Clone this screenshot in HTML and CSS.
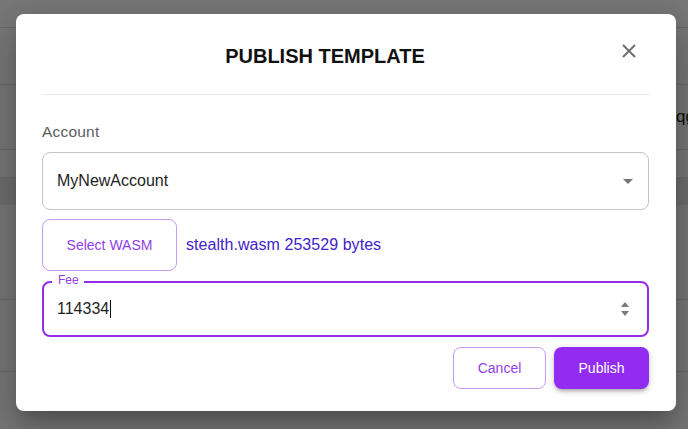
FILE: index.html
```html
<!DOCTYPE html>
<html>
<head>
<meta charset="utf-8">
<link rel="stylesheet" href="styles.css">
</head>
<body>
<div class="page">
  <div class="row r1"></div>
  <div class="row r2"></div>
  <div class="row r3"><span class="peek">qg</span></div>
  <div class="row r4"></div>
  <div class="row r5"></div>
  <div class="row r6"></div>
  <div class="row r7"></div>
</div>
<div class="backdrop"></div>
<div class="dialog">
  <div class="header">
    <div class="title">PUBLISH TEMPLATE</div>
    <div class="close">
      <svg width="16" height="16" viewBox="0 0 16 16"><path d="M2 2L14 14M14 2L2 14" stroke="#707070" stroke-width="2"/></svg>
    </div>
  </div>
  <div class="label">Account</div>
  <div class="select">
    <span class="value">MyNewAccount</span>
    <svg class="caret" width="10" height="5" viewBox="0 0 10 5"><path d="M0 0H10L5 5Z" fill="#757575"/></svg>
  </div>
  <div class="wasm-row">
    <div class="btn-outline wasm-btn">Select WASM</div>
    <span class="file">stealth.wasm 253529 bytes</span>
  </div>
  <div class="fee">
    <span class="fee-label">Fee</span>
    <span class="value">114334</span><span class="cursor"></span>
    <svg class="spin" width="10" height="16" viewBox="0 0 10 16"><path d="M1 6H9L5 1Z M1 10H9L5 15Z" fill="#7a7a7a"/></svg>
  </div>
  <div class="actions">
    <div class="btn-outline cancel">Cancel</div>
    <div class="btn-primary">Publish</div>
  </div>
</div>
</body>
</html>
```
FILE: styles.css
```css
* { box-sizing: border-box; }
html, body { margin: 0; padding: 0; }
body {
  width: 688px;
  height: 429px;
  overflow: hidden;
  font-family: "Liberation Sans", Arial, sans-serif;
  background: #fff;
  position: relative;
}
.page { display: flex; flex-direction: column; }
.row { border-bottom: 1px solid #e4e4e4; position: relative; }
.r1 { height: 28px; }
.r2 { height: 57px; }
.r3 { height: 65px; }
.r4 { height: 28px; }
.r5 { height: 27px; background: #ececec; border-bottom: none; }
.r6 { height: 95px; }
.r7 { height: 72px; }
.peek {
  position: absolute;
  left: 676px;
  top: 22px;
  font-size: 17px;
  color: #222;
}
.backdrop {
  position: absolute;
  inset: 0;
  background: rgba(0, 0, 0, 0.53);
}
.dialog {
  position: absolute;
  left: 16px;
  top: 14px;
  width: 660px;
  height: 397px;
  background: #fff;
  border-radius: 8px;
  padding: 0 27px 0 26px;
  display: flex;
  flex-direction: column;
  box-shadow: 0 11px 15px -7px rgba(0,0,0,.2), 0 24px 38px 3px rgba(0,0,0,.14), 0 9px 46px 8px rgba(0,0,0,.12);
}
.header {
  display: flex;
  height: 81px;
  border-bottom: 1px solid #e8e8e8;
}
.title {
  flex: 1;
  text-align: center;
  font-weight: 700;
  font-size: 20px;
  line-height: 24px;
  margin-top: 30px;
  color: #111;
}
.close {
  width: 41px;
  display: flex;
  justify-content: center;
  padding-top: 29px;
}
.label {
  margin-top: 27px;
  font-size: 15.5px;
  line-height: 20px;
  color: #5c5c5c;
  letter-spacing: 0.2px;
}
.select {
  margin-top: 10px;
  height: 58px;
  border: 1px solid #c4c4c4;
  border-radius: 8px;
  display: flex;
  align-items: center;
  padding: 0 15px 0 14px;
}
.value {
  font-size: 16px;
  color: #1e1e1e;
}
.caret { margin-left: auto; }
.wasm-row {
  margin-top: 9px;
  display: flex;
  align-items: center;
  gap: 9px;
}
.btn-outline {
  border: 1px solid #c79cf2;
  border-radius: 8px;
  color: #9240e6;
  font-size: 14px;
  display: flex;
  align-items: center;
  justify-content: center;
  background: #fff;
}
.wasm-btn { width: 135px; height: 52px; }
.file {
  font-size: 16px;
  color: #3f22cc;
  letter-spacing: 0.05px;
}
.fee {
  margin-top: 10px;
  height: 56px;
  border: 2px solid #922ee8;
  border-radius: 8px;
  display: flex;
  align-items: center;
  padding: 0 17px 0 13px;
  position: relative;
}
.fee-label {
  position: absolute;
  left: 8px;
  top: -11px;
  background: #fff;
  padding: 0 5px 0 6px;
  font-size: 12px;
  line-height: 16px;
  color: #9240e6;
}
.cursor {
  width: 1px;
  height: 18px;
  background: #111;
  margin-left: 1px;
}
.spin { margin-left: auto; }
.actions {
  margin-top: 10px;
  display: flex;
  justify-content: flex-end;
  gap: 8px;
}
.cancel { width: 93px; height: 42px; }
.btn-primary {
  width: 95px;
  height: 42px;
  border-radius: 8px;
  background: #922cf2;
  color: #fff;
  font-size: 14px;
  display: flex;
  align-items: center;
  justify-content: center;
  box-shadow: 0 3px 3px -2px rgba(0,0,0,.2), 0 3px 4px 0 rgba(0,0,0,.14), 0 1px 8px 0 rgba(0,0,0,.12);
}
```
